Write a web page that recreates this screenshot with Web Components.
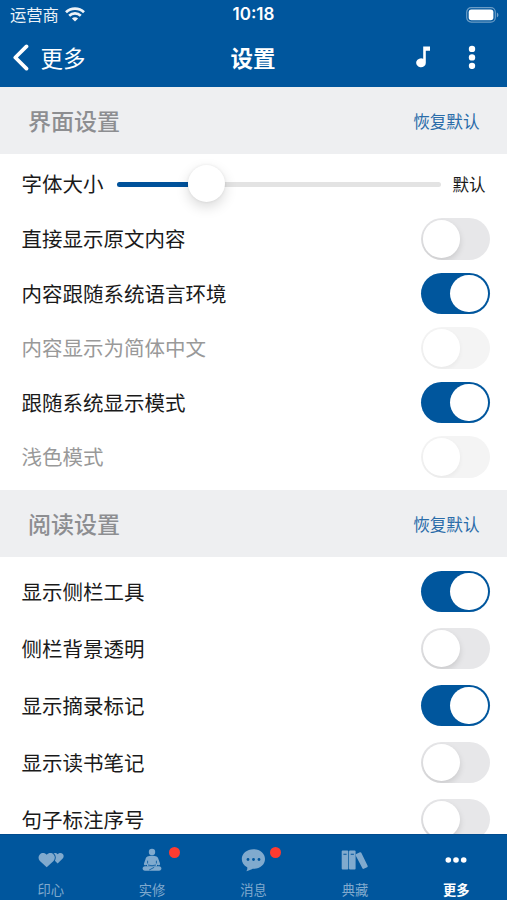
<!DOCTYPE html>
<html lang="zh-CN">
<head>
<meta charset="utf-8">
<title>设置</title>
<style>
html,body{margin:0;height:100%;overflow:hidden;background:#fff}
body{font-family:"Noto Sans CJK SC",sans-serif;color:#1a1a1a}
</style>
</head>
<body>
<settings-app></settings-app>
<script>
const define = (name, html) => {
  const tpl = document.createElement('template');
  tpl.innerHTML = html;
  customElements.define(name, class extends HTMLElement {
    constructor() {
      super();
      this.attachShadow({mode: 'open'}).appendChild(tpl.content.cloneNode(true));
    }
  });
};

define('status-bar', `
<style>
:host{display:grid;grid-template-columns:1fr auto 1fr;align-items:center;height:29px;padding:0 8px 0 10px;box-sizing:border-box;color:#fff}
.left{display:flex;align-items:center;gap:6px;font-size:16.3px;line-height:29px;opacity:.93}
.time{font:600 17px/29px Inter,sans-serif;margin-right:2px}
.bat{justify-self:end;display:block}
svg{display:block}
</style>
<div class="left"><span>运营商</span>
<svg width="20" height="15" viewBox="0 0 20 15" fill="none" stroke="#fff" stroke-width="2.7"><path d="M1 5.3C6 .4 14 .4 19 5.3"/><path d="M4.2 8.7C7.5 5.6 12.5 5.6 15.8 8.7"/><path d="M10 14.5 6.9 11.4C8.6 9.8 11.4 9.8 13.1 11.4Z" fill="#fff" stroke="none"/></svg></div>
<div class="time">10:18</div>
<svg class="bat" width="33" height="16" viewBox="0 0 33 16"><rect x=".7" y=".7" width="28.6" height="14.4" rx="4.5" fill="none" stroke="#fff" stroke-opacity=".42" stroke-width="1.2"/><rect x="2.7" y="2.6" width="24.7" height="10.6" rx="2.7" fill="#fff"/><path d="M30.9 5.5c2 .8 2 4 0 4.8Z" fill="#fff" opacity=".45"/></svg>
`);

define('nav-bar', `
<style>
:host{display:grid;grid-template-columns:1fr auto 1fr;align-items:center;height:58px;padding:0 31px 2px 12px;box-sizing:border-box;color:#fff}
.back{display:flex;align-items:center;gap:11.5px;font-size:22.5px;line-height:56px}
.back svg{margin-top:1px}
.title{font-size:22.5px;font-weight:700;line-height:56px;margin-left:18px}
.actions{display:flex;align-items:center;justify-content:flex-end;gap:37px}
svg{display:block}
</style>
<div class="back"><svg width="17" height="27" viewBox="0 0 17 27" fill="none" stroke="#fff" stroke-width="3.7" stroke-linecap="round" stroke-linejoin="round"><path d="M14.5 2.4 3.3 13.5 14.5 24.6"/></svg><span>更多</span></div>
<div class="title">设置</div>
<div class="actions">
<svg width="16" height="22" viewBox="0 0 16 22" fill="#fff"><path d="M8.2 .5h6.8v4.3h-4.2v12.1A4.8 4.5 0 1 1 8.2 12.8Z"/></svg>
<svg width="8" height="24" viewBox="0 0 8 24" fill="#fff"><circle cx="4" cy="3.9" r="3.2"/><circle cx="4" cy="12.4" r="3.2"/><circle cx="4" cy="20.9" r="3.2"/></svg>
</div>
`);

define('section-header', `
<style>
:host{display:flex;align-items:center;justify-content:space-between;height:67px;padding:0 27.5px 0 28px;box-sizing:border-box;background:#eeeff1}
.t{font-size:23px;font-weight:500;color:#8d8e91;padding-bottom:2px}
.r{font-size:16.6px;color:#2a6ca9}
</style>
<span class="t"><slot></slot></span><span class="r">恢复默认</span>
`);

define('toggle-switch', `
<style>
:host{display:flex;width:69px;height:41.5px;border-radius:21px;background:#e7e7e9;padding:2px;box-sizing:border-box;overflow:hidden}
:host([on]){background:#00569d;justify-content:flex-end}
:host([off]){background:#f4f4f4}
i{width:37.5px;height:37.5px;border-radius:50%;background:#fff;box-shadow:0 3px 6px rgba(0,0,0,.13)}
:host([on]) i{box-shadow:none}
:host([off]) i{box-shadow:0 2px 5px rgba(0,0,0,.05)}
</style><i></i>
`);

define('setting-row', `
<style>
:host{display:flex;align-items:center;justify-content:space-between;height:54.5px;padding:0 17.5px 0 21.5px;box-sizing:border-box;font-size:20.5px}
span{padding-bottom:1px}
:host([tall]){height:57px}
:host([muted]){color:#999}
</style>
<span><slot></slot></span><slot name="control"></slot>
`);

define('font-slider', `
<style>
:host{display:flex;align-items:center;height:54.5px;padding:0 21.5px 0 21.5px;box-sizing:border-box;font-size:20.5px}
.n{padding-bottom:2px}
.track{flex:1;display:flex;align-items:center;height:5px;margin:0 12px 0 13px;border-radius:3px;background:#e3e3e3}
.fill{width:71px;height:5px;border-radius:3px 0 0 3px;background:#00529b}
.knob{width:37px;height:37px;flex:none;border-radius:50%;background:#fff;box-shadow:0 5px 13px rgba(0,0,0,.15),0 0 3px rgba(0,0,0,.08);margin-bottom:2px}
.v{font-size:16.5px;padding-bottom:1px}
</style>
<span class="n">字体大小</span><div class="track"><div class="fill"></div><div class="knob"></div></div><span class="v">默认</span>
`);

define('tab-item', `
<style>
:host{display:flex;flex-direction:column;align-items:center;flex:1;color:#80aace;font-size:13.3px;position:relative}
:host([active]){color:#fff;font-weight:700}
.icon{height:30px;margin-top:10px;display:flex;align-items:center}
.label{line-height:18px;margin-top:6px}
:host([badge])::after{content:"";position:absolute;left:calc(50% + 16.5px);top:11.5px;width:11px;height:11px;border-radius:50%;background:#ff3b30}
</style>
<div class="icon"><slot name="icon"></slot></div><div class="label"><slot></slot></div>
`);

define('tab-bar', `
<style>
:host{display:flex;height:66px;background:#00569d;border-top:1px solid #004b8e;box-sizing:border-box;flex:none}
svg{display:block;fill:#80aace}
</style>
<tab-item><svg slot="icon" width="26" height="16" viewBox="0 0 26 16"><path d="M19.6 11.4 14.6 6.6C13.4 5.3 13.3 3.2 14.6 1.9 16 .5 18.3.5 19.7 2.2 21.1.5 23.4.5 24.8 1.9 26 3.2 25.9 5.3 24.7 6.5Z"/><path d="M8.7 15.3 1.9 9C.2 7.3 0 4.3 1.8 2.4 3.7.5 6.8.4 8.7 2.8 10.6.4 13.7.5 15.6 2.4c1.8 1.9 1.6 4.9-.1 6.6Z" stroke="#00569d" stroke-width="1.8" paint-order="stroke"/></svg>印心</tab-item>
<tab-item badge><svg slot="icon" width="20" height="24" viewBox="0 0 20 24"><circle cx="10" cy="4" r="3.2"/><path d="M10 7.8c4.2 0 5.8 1 6.5 3.4l1.5 4.3c.4 1.3-.6 2.1-1.7 1.7l-1.3-.4v1.4H5v-1.4l-1.3.4c-1.1.4-2.1-.4-1.7-1.7l1.5-4.3C4.2 8.8 5.8 7.8 10 7.8Z"/><path d="M3 18.2h14c3.2.3 3.2 4.6 0 4.6H3c-3.2 0-3.2-4.3 0-4.6Z"/><path d="M5.6 15.5v-2.8M14.4 15.5v-2.8M6 17q4 1.4 8 0M7.2 22l5-2.7" fill="none" stroke="#00569d" stroke-width=".8"/></svg>实修</tab-item>
<tab-item badge><svg slot="icon" width="25" height="24" viewBox="0 0 25 24"><path d="M12.5 1.2C19.2 1.2 24 5.5 24 11s-4.8 9.7-11.3 9.7c-1.2 0-2 .5-3.2 1.1-1.1.6-2.5 1.1-4.1 1.4.9-1 1.1-2.8.8-4C2.7 17.5.8 14.6.8 11 .8 5.5 5.8 1.2 12.5 1.2Z"/><g fill="#00569d"><circle cx="7" cy="11.5" r="1.4"/><circle cx="12.5" cy="11.5" r="1.4"/><circle cx="18" cy="11.5" r="1.4"/></g></svg>消息</tab-item>
<tab-item><svg slot="icon" width="28" height="20" viewBox="0 0 28 20"><rect x=".7" y=".5" width="6.6" height="19" rx="1"/><rect x="8" y=".5" width="6.6" height="19" rx="1"/><path d="m14.7 4.3 4.2-2c.6-.3 1.1-.1 1.4.5l6.3 13c.3.6.1 1.1-.5 1.4l-3.3 1.6c-.6.3-1.1.1-1.4-.5L14.7 5.5Z"/><path d="M2.4 4.3h3.2M9.7 4.3h3.2" stroke="#00569d" stroke-width="1.1"/></svg>典藏</tab-item>
<tab-item active><svg slot="icon" width="22" height="8" viewBox="0 0 22 8" style="fill:#fff"><circle cx="3.3" cy="4" r="2.8"/><circle cx="11" cy="4" r="2.8"/><circle cx="18.7" cy="4" r="2.8"/></svg>更多</tab-item>
`);

define('settings-app', `
<style>
:host{display:flex;flex-direction:column;height:900px;width:507px;overflow:hidden}
header{background:#00569d;height:87px;flex:none}
main{flex:1;min-height:0;overflow:hidden}
.g1{height:336px;padding-top:3px;box-sizing:border-box}
.g2{padding-top:6px}
</style>
<header><status-bar></status-bar><nav-bar></nav-bar></header>
<main>
<section-header>界面设置</section-header>
<div class="g1">
<font-slider></font-slider>
<setting-row>直接显示原文内容<toggle-switch slot="control"></toggle-switch></setting-row>
<setting-row>内容跟随系统语言环境<toggle-switch slot="control" on></toggle-switch></setting-row>
<setting-row muted>内容显示为简体中文<toggle-switch slot="control" off></toggle-switch></setting-row>
<setting-row>跟随系统显示模式<toggle-switch slot="control" on></toggle-switch></setting-row>
<setting-row muted>浅色模式<toggle-switch slot="control" off></toggle-switch></setting-row>
</div>
<section-header>阅读设置</section-header>
<div class="g2">
<setting-row tall>显示侧栏工具<toggle-switch slot="control" on></toggle-switch></setting-row>
<setting-row tall>侧栏背景透明<toggle-switch slot="control"></toggle-switch></setting-row>
<setting-row tall>显示摘录标记<toggle-switch slot="control" on></toggle-switch></setting-row>
<setting-row tall>显示读书笔记<toggle-switch slot="control"></toggle-switch></setting-row>
<setting-row tall>句子标注序号<toggle-switch slot="control"></toggle-switch></setting-row>
</div>
</main>
<tab-bar></tab-bar>
`);
</script>
</body>
</html>
